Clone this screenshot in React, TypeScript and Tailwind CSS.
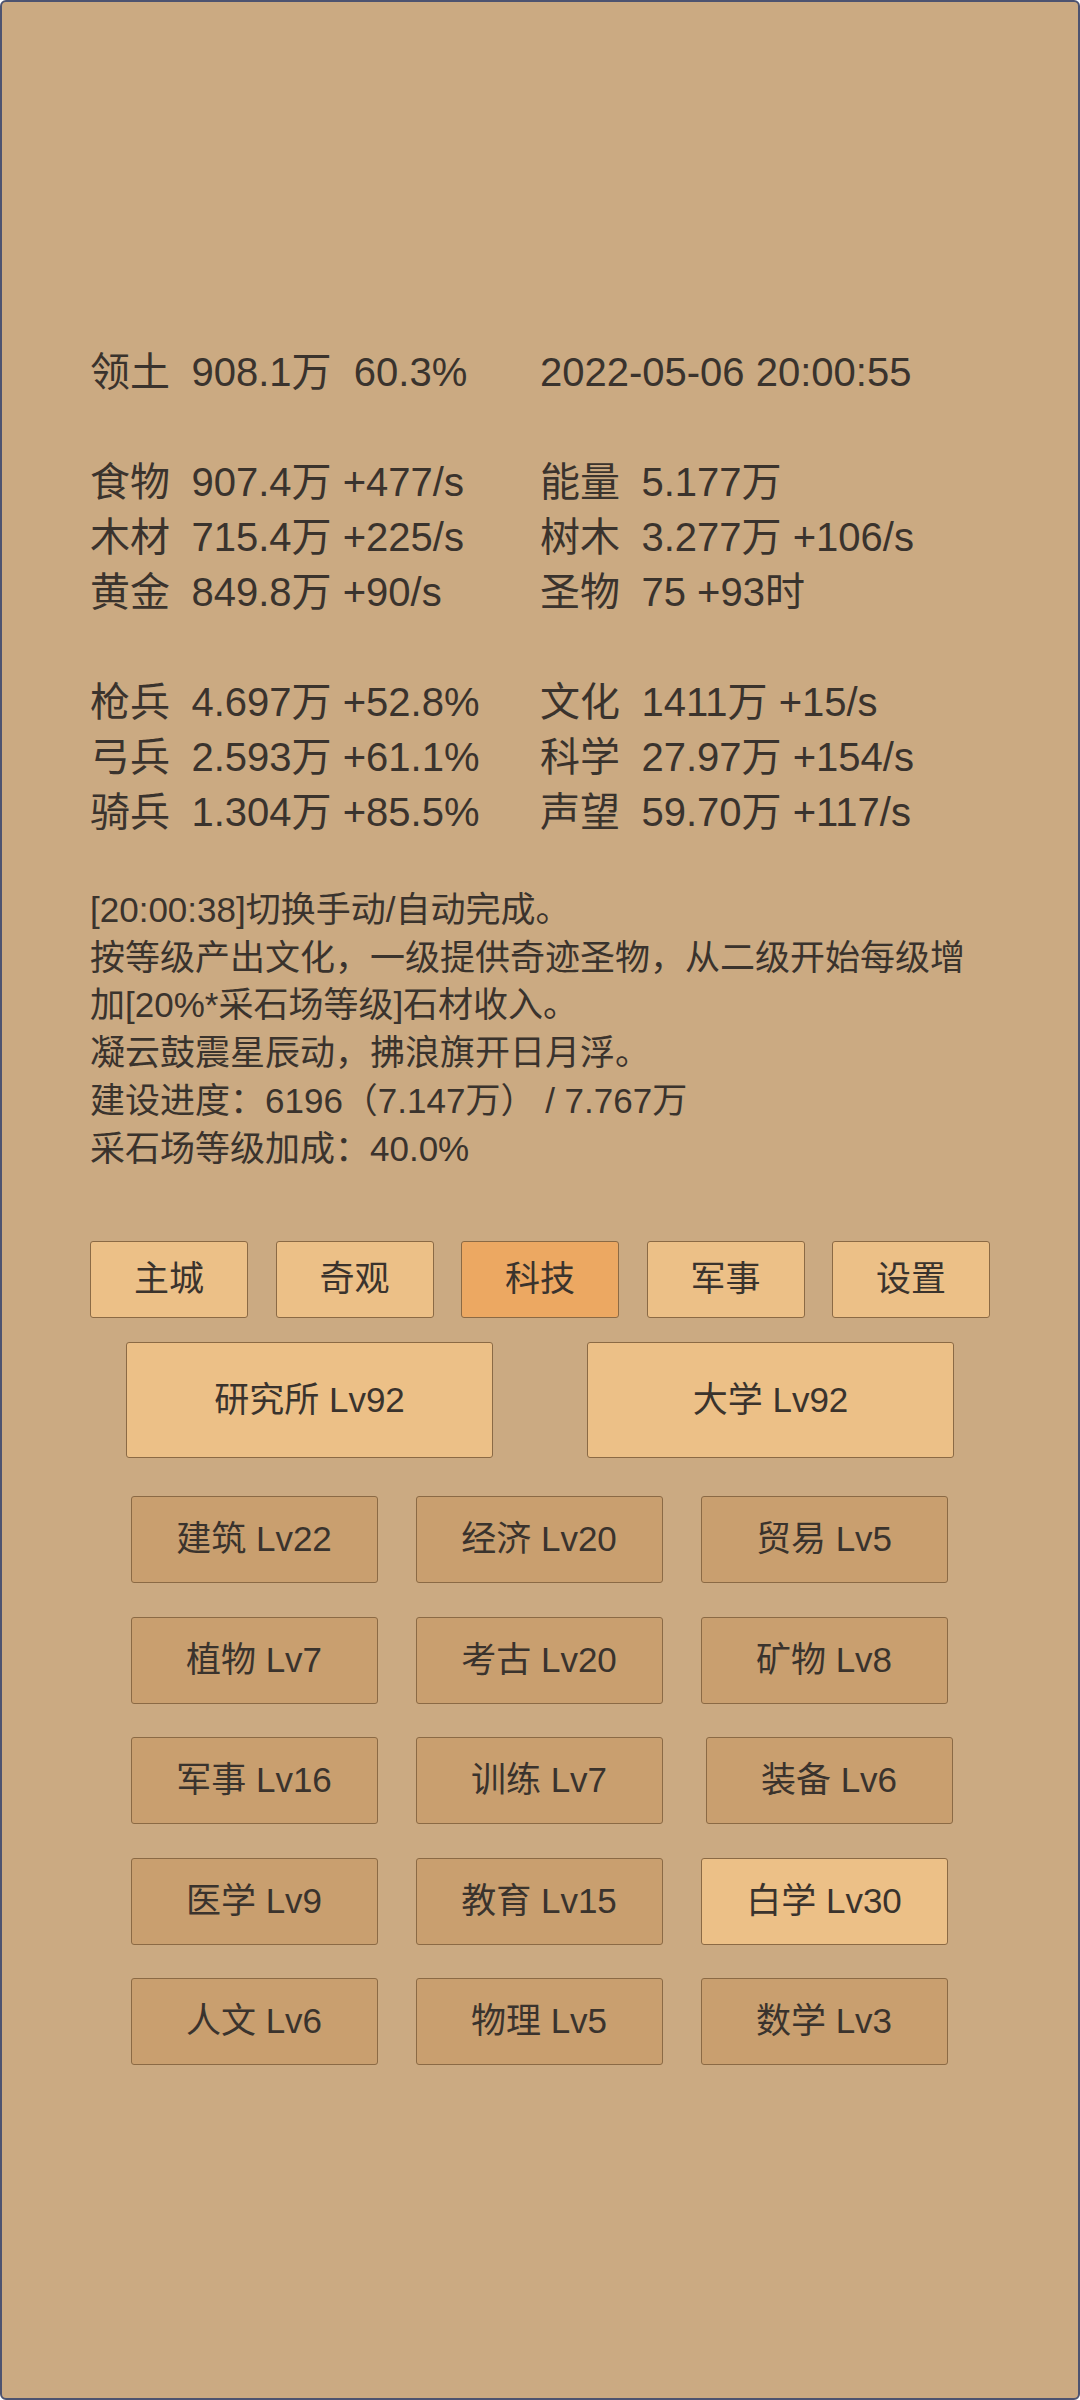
import React from "react";

const font = { fontFamily: '"Liberation Sans", "Noto Sans CJK SC", sans-serif' };

type Stat = { label?: string; value: string } | null;

const left: Stat[] = [
  { label: "领土", value: "908.1万  60.3%" },
  null,
  { label: "食物", value: "907.4万 +477/s" },
  { label: "木材", value: "715.4万 +225/s" },
  { label: "黄金", value: "849.8万 +90/s" },
  null,
  { label: "枪兵", value: "4.697万 +52.8%" },
  { label: "弓兵", value: "2.593万 +61.1%" },
  { label: "骑兵", value: "1.304万 +85.5%" },
];

const right: Stat[] = [
  { value: "2022-05-06 20:00:55" },
  null,
  { label: "能量", value: "5.177万" },
  { label: "树木", value: "3.277万 +106/s" },
  { label: "圣物", value: "75 +93时" },
  null,
  { label: "文化", value: "1411万 +15/s" },
  { label: "科学", value: "27.97万 +154/s" },
  { label: "声望", value: "59.70万 +117/s" },
];

function StatCol({ rows }: { rows: Stat[] }) {
  return (
    <div className="flex flex-col">
      {rows.map((r, i) =>
        r === null ? (
          <div key={i} className="h-[55px]" />
        ) : (
          <div key={i} className="h-[55px] leading-[55px] whitespace-pre flex">
            {r.label ? <span className="mr-[21.5px]">{r.label}</span> : null}
            <span>{r.value}</span>
          </div>
        )
      )}
    </div>
  );
}

const nav = ["主城", "奇观", "科技", "军事", "设置"];

const grid: { t: string; hi?: boolean; shift?: boolean }[] = [
  { t: "建筑 Lv22" },
  { t: "经济 Lv20" },
  { t: "贸易 Lv5" },
  { t: "植物 Lv7" },
  { t: "考古 Lv20" },
  { t: "矿物 Lv8" },
  { t: "军事 Lv16" },
  { t: "训练 Lv7" },
  { t: "装备 Lv6", shift: true },
  { t: "医学 Lv9" },
  { t: "教育 Lv15" },
  { t: "白学 Lv30", hi: true },
  { t: "人文 Lv6" },
  { t: "物理 Lv5" },
  { t: "数学 Lv3" },
];

export default function App() {
  return (
    <div
      style={font}
      className="w-[1080px] h-[2400px] bg-[#cbaa82] border-2 border-[#4d5370] rounded-[6px] text-[#3a332d] overflow-hidden"
    >
      <div className="px-[88px] pt-[343px]">
        <div className="grid grid-cols-2 text-[40px]">
          <StatCol rows={left} />
          <StatCol rows={right} />
        </div>

        <div className="mt-[46px] text-[35px] leading-[47.7px]">
          <div>[20:00:38]切换手动/自动完成。</div>
          <div>按等级产出文化，一级提供奇迹圣物，从二级开始每级增加[20%*采石场等级]石材收入。</div>
          <div>凝云鼓震星辰动，拂浪旗开日月浮。</div>
          <div>建设进度：6196（7.147万） / 7.767万</div>
          <div>采石场等级加成：40.0%</div>
        </div>

        <div className="mt-[69px] flex justify-between text-[35px]">
          {nav.map((n) => (
            <div
              key={n}
              className={`w-[158px] h-[77px] flex items-center justify-center border border-[#8b6a45] rounded-[3px] ${
                n === "科技" ? "bg-[#eca862]" : "bg-[#ecc087]"
              }`}
            >
              {n}
            </div>
          ))}
        </div>

        <div className="mt-[24px] flex justify-between px-[36px] text-[35px]">
          {["研究所 Lv92", "大学 Lv92"].map((b) => (
            <div
              key={b}
              className="w-[367px] h-[116px] flex items-center justify-center border border-[#8b6a45] rounded-[3px] bg-[#ecc087]"
            >
              {b}
            </div>
          ))}
        </div>
      </div>

      <div className="mt-[38px] grid grid-cols-[247px_247px_247px] justify-center gap-x-[38px] gap-y-[33.5px] text-[35px] -translate-x-[1px]">
        {grid.map((g) => (
          <div
            key={g.t}
            className={`h-[87px] flex items-center justify-center border border-[#8b6a45] rounded-[3px] ${
              g.hi ? "bg-[#ecc087]" : "bg-[#c99f6f]"
            } ${g.shift ? "ml-[5px] -mr-[5px]" : ""}`}
          >
            {g.t}
          </div>
        ))}
      </div>
    </div>
  );
}
